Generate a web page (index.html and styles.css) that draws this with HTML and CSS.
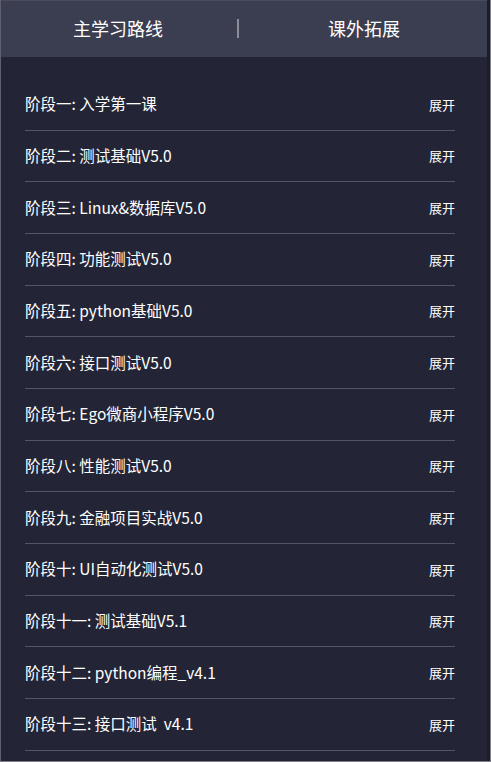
FILE: index.html
```html
<!doctype html>
<html lang="zh">
<head>
    <meta charset="UTF-8">
    <title>学习路线</title>
    <link rel="stylesheet" href="styles.css">
</head>
<body>

<div class="frame">
    <div class="panel">
        <div class="tabs">
            <div class="tab tab-main">主学习路线</div>
            <div class="tab-line"></div>
            <div class="tab">课外拓展</div>
        </div>

        <ul class="stages">
            <li class="stage"><span class="stage-name">阶段一: 入学第一课</span><span class="stage-open">展开</span></li>
            <li class="stage"><span class="stage-name">阶段二: 测试基础V5.0</span><span class="stage-open">展开</span></li>
            <li class="stage"><span class="stage-name">阶段三: Linux&amp;数据库V5.0</span><span class="stage-open">展开</span></li>
            <li class="stage"><span class="stage-name">阶段四: 功能测试V5.0</span><span class="stage-open">展开</span></li>
            <li class="stage"><span class="stage-name">阶段五: python基础V5.0</span><span class="stage-open">展开</span></li>
            <li class="stage"><span class="stage-name">阶段六: 接口测试V5.0</span><span class="stage-open">展开</span></li>
            <li class="stage"><span class="stage-name">阶段七: Ego微商小程序V5.0</span><span class="stage-open">展开</span></li>
            <li class="stage"><span class="stage-name">阶段八: 性能测试V5.0</span><span class="stage-open">展开</span></li>
            <li class="stage"><span class="stage-name">阶段九: 金融项目实战V5.0</span><span class="stage-open">展开</span></li>
            <li class="stage"><span class="stage-name">阶段十: UI自动化测试V5.0</span><span class="stage-open">展开</span></li>
            <li class="stage"><span class="stage-name">阶段十一: 测试基础V5.1</span><span class="stage-open">展开</span></li>
            <li class="stage"><span class="stage-name">阶段十二: python编程_v4.1</span><span class="stage-open">展开</span></li>
            <li class="stage"><span class="stage-name">阶段十三: 接口测试&nbsp;&nbsp;v4.1</span><span class="stage-open">展开</span></li>
        </ul>
    </div>
</div>

</body>
</html>
```

FILE: styles.css
```css
html, body {
    margin: 0;
    padding: 0;
}
body {
    background: #232536;
    font-family: "Noto Sans CJK SC", "Noto Sans", sans-serif;
    color: #fff;
}

/* outer frame with the thin grey edges */
.frame {
    height: 762px;
    box-sizing: border-box;
    border-left: 1px solid #5e606d;
    border-right: 1px solid #7d7e87;
    border-bottom: 1px solid #7d7e87;
    overflow: hidden;
}
.panel {
    height: 100%;
    border-right: 3px solid #1b1d29;
    background: #232536;
}

.tabs {
    display: flex;
    align-items: center;
    height: 57px;
    background: #3b3d50;
    border-top: 1px solid #4a4c5d;
    box-sizing: border-box;
}
.tab {
    flex: 1;
    text-align: center;
    font-size: 18px;
    color: #fff;
    padding-bottom: 2px;
}
.tab-main {
    flex: none;
    width: 234px;
}
.tab-line {
    width: 2px;
    height: 19px;
    background: #8c8d98;
    margin: 0 2px 2px 2px;
}

.stages {
    list-style: none;
    margin: 0;
    padding: 22px 32px 0 24px;
}
.stage {
    display: flex;
    align-items: center;
    justify-content: space-between;
    height: 51.67px;
    box-sizing: border-box;
    border-bottom: 1px solid #545665;
}
.stage-name {
    font-size: 15.5px;
    padding-bottom: 2px;
}
.stage-open {
    font-size: 13px;
}
```
